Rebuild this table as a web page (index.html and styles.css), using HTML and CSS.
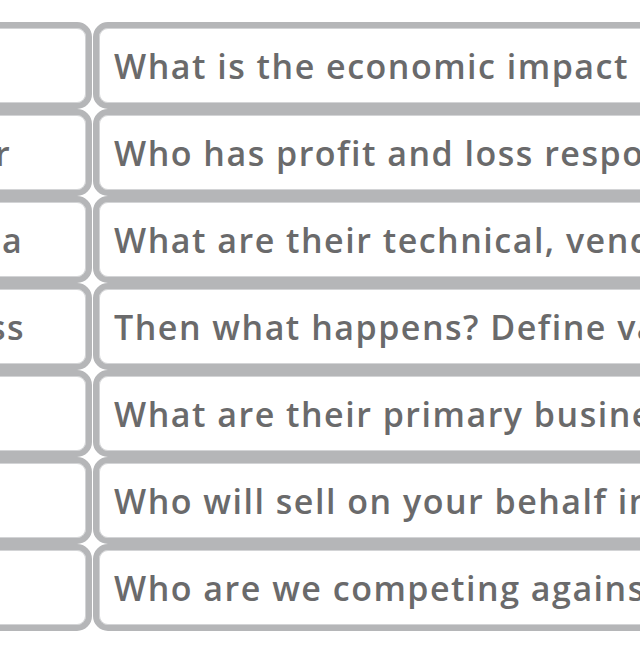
FILE: index.html
```html
<!DOCTYPE html>
<html lang="en">
<head>
<meta charset="utf-8">
<title>MEDDIC</title>
<link rel="stylesheet" href="styles.css">
</head>
<body>
<div class="viewport">
  <div class="grid">
    <div class="cell term">Metrics</div>
    <div class="cell desc">What is the economic impact of the solution?</div>
    <div class="cell term">Economic Buyer</div>
    <div class="cell desc">Who has profit and loss responsibility?</div>
    <div class="cell term">Decision Criteria</div>
    <div class="cell desc">What are their technical, vendor and financial criteria?</div>
    <div class="cell term">Decision Process</div>
    <div class="cell desc">Then what happens? Define validation steps.</div>
    <div class="cell term">Identify Pain</div>
    <div class="cell desc">What are their primary business issues?</div>
    <div class="cell term">Champion</div>
    <div class="cell desc">Who will sell on your behalf inside the account?</div>
    <div class="cell term">Competition</div>
    <div class="cell desc">Who are we competing against?</div>
  </div>
</div>
</body>
</html>
```
FILE: styles.css
```css
html, body {
  margin: 0;
  padding: 0;
  background: #ffffff;
}
.viewport {
  width: 640px;
  height: 650px;
  overflow: hidden;
}
.grid {
  display: grid;
  grid-template-columns: 386px 760px;
  grid-auto-rows: 87px;
  column-gap: 1px;
  margin-left: -294px;
  padding-top: 22px;
}
.cell {
  box-sizing: border-box;
  border: 6px solid #b5b6b8;
  border-radius: 15px;
  box-shadow: inset 0 0 0 1px #d3d4d6;
  background: #ffffff;
  display: flex;
  align-items: center;
  padding: 0 15px;
  white-space: nowrap;
  overflow: hidden;
  font-family: "Open Sans", "Noto Sans", sans-serif;
  font-size: 34px;
  font-weight: 600;
  letter-spacing: 1.5px;
  color: #6a6a6b;
}
```
